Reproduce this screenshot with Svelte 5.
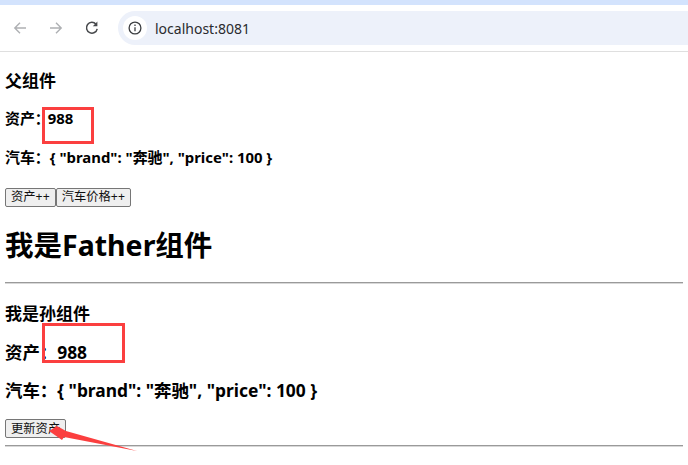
<script>
  const car = '{ "brand": "奔驰", "price": 100 }';
</script>

<div class="browser">
  <div class="tabstrip"></div>
  <div class="toolbar">
    <svg class="nav" width="16" height="16" viewBox="0 0 16 16" fill="none" stroke="#aeb0b3" stroke-width="1.4"><path d="M14 8H3M8 2.8 2.8 8 8 13.2" /></svg>
    <svg class="nav" width="16" height="16" viewBox="0 0 16 16" fill="none" stroke="#aeb0b3" stroke-width="1.4"><path d="M2 8h11M8 2.8 13.2 8 8 13.2" /></svg>
    <svg class="nav" width="16" height="16" viewBox="0 0 16 16" fill="none" stroke="#47494c" stroke-width="1.5"><path d="M13.2 8.8A5.4 5.4 0 1 1 12 4.2" /><path d="M13.4 1.6v4.6H8.8z" fill="#47494c" stroke="none" /></svg>
    <div class="omnibox">
      <span class="info">
        <svg width="14" height="14" viewBox="0 0 14 14" fill="none" stroke="#3c3e41" stroke-width="1.3"><circle cx="7" cy="7" r="5.9" /><path d="M7 6.2v4M7 3.6v1.4" /></svg>
      </span>
      <span class="url">localhost:8081</span>
    </div>
  </div>
</div>

<main>
  <h4 class="first">父组件</h4>
  <h5>资产：<span class="num-a">988</span></h5>
  <h5>汽车：{car}</h5>
  <button>资产++</button><button>汽车价格++</button>
  <h1>我是Father组件</h1>
  <hr />
  <h4 class="grand">我是孙组件</h4>
  <h3>资产：<span class="num-b">988</span></h3>
  <h3 class="tail">汽车：{car}</h3>
  <button>更新资产</button>
  <hr class="end" />
</main>

<!-- red annotations drawn over the page -->
<div class="mark mark-a"></div>
<div class="mark mark-b"></div>
<svg class="arrow" width="100" height="36" viewBox="0 0 100 36"><path d="M9 11 L17 6 L26 11 L97 31 L24 17 L22 20z" fill="#fb3f3f" /></svg>

<style>
  :global(body) {
    margin: 0;
    height: 465px;
    overflow: hidden;
    background: #fff;
    position: relative;
  }

  .browser {
    height: 52px;
    border-bottom: 1px solid #dfdfdf;
    box-sizing: border-box;
  }

  .tabstrip {
    height: 5px;
    background: #d3e3fd;
  }

  .toolbar {
    display: flex;
    align-items: center;
    height: 46px;
    padding-left: 12px;
    box-sizing: border-box;
  }

  .nav {
    margin-right: 20px;
    flex: none;
  }

  .nav:nth-child(3) {
    margin-right: 18px;
  }

  .omnibox {
    flex: 1;
    height: 34px;
    background: #edf1fa;
    border-radius: 17px 0 0 17px;
    display: flex;
    align-items: center;
    padding-left: 5px;
    margin-right: -1px;
  }

  .info {
    width: 24px;
    height: 24px;
    border-radius: 50%;
    background: #fff;
    display: flex;
    align-items: center;
    justify-content: center;
  }

  .url {
    margin-left: 8px;
    font: 14px "Noto Sans", "Noto Sans CJK SC", sans-serif;
    color: #2a2b2e;
  }

  main {
    padding: 0 5px;
    font-family: "Noto Sans", "Noto Sans CJK SC", sans-serif;
    color: #000;
  }

  h1,
  h3,
  h4,
  h5 {
    font-weight: 700;
    margin: 0;
    line-height: 1.2;
  }

  h1 {
    font-size: 28.5px;
    margin: 18px 0 20px;
  }

  h3 {
    font-size: 17.4px;
    margin-bottom: 17px;
  }

  h3.tail {
    margin-bottom: 19px;
  }

  h4 {
    font-size: 17px;
    margin-bottom: 17px;
  }

  h4.first {
    margin-top: 19px;
    margin-bottom: 19px;
  }

  h4.grand {
    margin-top: 20px;
  }

  h5 {
    font-size: 14.9px;
    margin-bottom: 21px;
  }

  .num-a {
    margin-left: -2px;
  }

  hr {
    border: none;
    border-top: 1px solid #9a9a9a;
    border-bottom: 1px solid #d8d8d8;
    margin: 0;
  }

  hr.end {
    margin-top: 4px;
  }

  button {
    font: 12.3px "Noto Sans", "Noto Sans CJK SC", sans-serif;
    height: 19px;
    padding: 0 5px;
    background: #efefef;
    border: 1px solid #767676;
    border-radius: 2px;
    color: #111;
    line-height: 1;
    vertical-align: top;
  }

  .mark {
    position: absolute;
    border: 3px solid #fb3f3f;
    box-sizing: border-box;
  }

  .mark-a {
    left: 42px;
    top: 107px;
    width: 52px;
    height: 37px;
  }

  .mark-b {
    left: 42px;
    top: 323px;
    width: 83px;
    height: 40px;
  }

  .arrow {
    position: absolute;
    left: 40px;
    top: 420px;
  }
</style>
